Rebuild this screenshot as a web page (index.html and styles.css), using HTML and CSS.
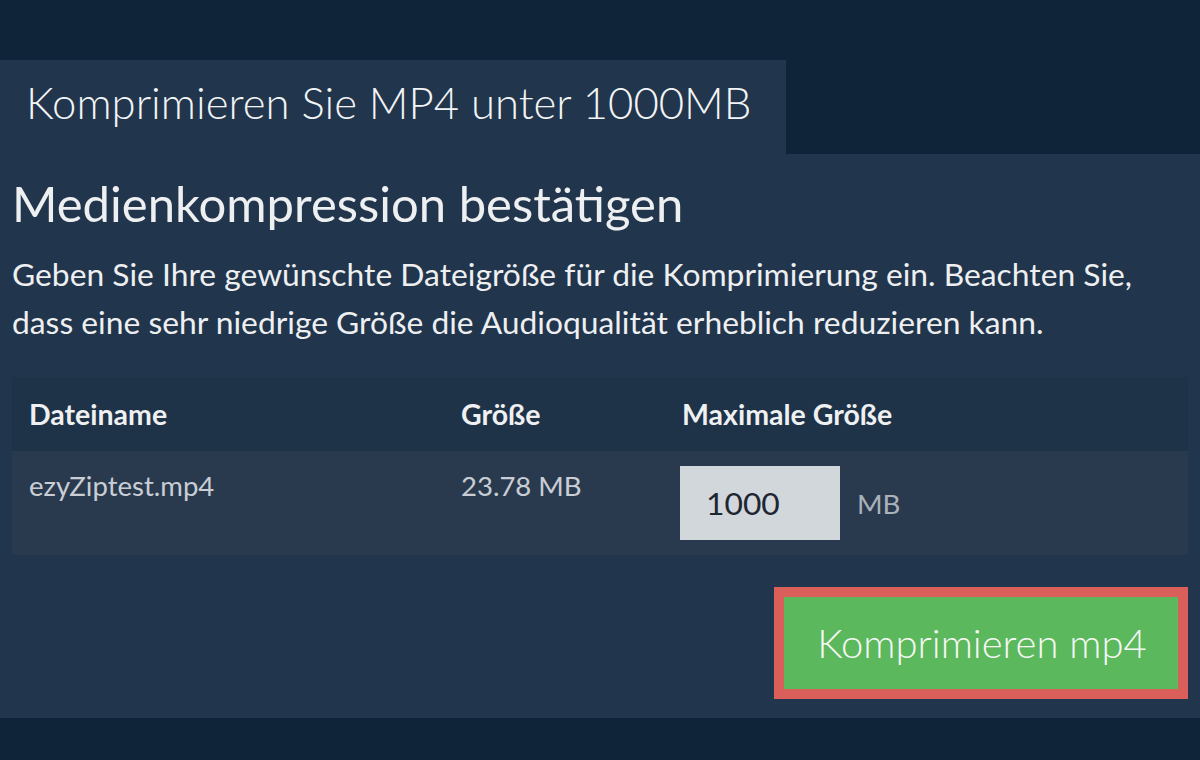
FILE: index.html
```html
<!DOCTYPE html>
<html lang="de">
<head>
<meta charset="utf-8">
<title>Komprimieren Sie MP4 unter 1000MB</title>
<link rel="stylesheet" href="styles.css">
</head>
<body>
<div class="page">
  <div class="tab">Komprimieren Sie MP4 unter 1000MB</div>
  <main class="panel">
    <h1 class="title">Medienkompression bestätigen</h1>
    <p class="intro">Geben Sie Ihre gewünschte Dateigröße für die Komprimierung ein. Beachten Sie, dass eine sehr niedrige Größe die Audioqualität erheblich reduzieren kann.</p>
    <table class="files">
      <thead>
        <tr>
          <th class="col-name">Dateiname</th>
          <th class="col-size">Größe</th>
          <th class="col-max">Maximale Größe</th>
        </tr>
      </thead>
      <tbody>
        <tr>
          <td class="cell-text">ezyZiptest.mp4</td>
          <td class="cell-text">23.78 MB</td>
          <td class="cell-input">
            <div class="size-field">
              <input class="size-input" type="text" value="1000">
              <span class="unit">MB</span>
            </div>
          </td>
        </tr>
      </tbody>
    </table>
    <div class="actions">
      <button class="compress-btn" type="button">Komprimieren mp4</button>
    </div>
  </main>
</div>
</body>
</html>
```

FILE: styles.css
```css
html, body {
  margin: 0;
  padding: 0;
}

body {
  background: #0f2339;
  font-family: Lato, "Open Sans", "Liberation Sans", sans-serif;
  color: #f0f1f2;
  width: 1200px;
  height: 760px;
  overflow: hidden;
}

.page {
  padding-top: 60px;
}

.tab {
  display: block;
  width: fit-content;
  box-sizing: border-box;
  background: #21354c;
  height: 94px;
  line-height: 84px;
  padding: 0 35px 0 26px;
  font-size: 43.7px;
  font-weight: 300;
  color: #f3f4f5;
  white-space: nowrap;
}

.panel {
  display: block;
  background: #21354c;
  padding: 0 12px 20px;
  height: 544px;
}

.title {
  margin: 0;
  padding-top: 19px;
  font-size: 49px;
  line-height: 60px;
  font-weight: 400;
  color: #eeeff1;
}

.intro {
  margin: 17px 0 0;
  font-size: 31.8px;
  line-height: 48px;
  color: #eeeff1;
}

.files {
  margin-top: 31px;
  width: 100%;
  border-collapse: collapse;
}

.files th {
  background: #1e3248;
  text-align: left;
  font-weight: 700;
  font-size: 28.5px;
  color: #eef0f2;
  height: 74px;
  line-height: 30px;
  padding: 0 17px;
}

.col-name { width: 398px; }
.col-size { width: 187px; }

.files td {
  background: #2a3a4e;
  vertical-align: top;
  padding: 20px 17px 16px;
  color: #c9ced5;
  font-size: 27.5px;
  line-height: 30px;
}

.files td.cell-input {
  padding: 15px 17px 15px 15px;
}

.size-field {
  display: flex;
  align-items: center;
  gap: 17px;
}

.size-input {
  width: 160px;
  height: 74px;
  box-sizing: border-box;
  border: none;
  margin: 0;
  padding: 0 0 0 26px;
  background: #d2d7dc;
  color: #1e2631;
  font-family: Lato, "Open Sans", sans-serif;
  font-size: 31.8px;
  outline: none;
}

.unit {
  font-size: 27.6px;
  color: #a9b1bb;
  padding-top: 2px;
}

.actions {
  display: flex;
  justify-content: flex-end;
  margin-top: 32px;
}

.compress-btn {
  width: 414px;
  height: 112px;
  box-sizing: border-box;
  border: 10px solid #da5e5a;
  background: #5cb85c;
  color: #f6f8f6;
  font-family: Lato, "Open Sans", sans-serif;
  font-size: 40px;
  font-weight: 300;
  line-height: 92px;
  padding: 0 0 0 2px;
  cursor: pointer;
}
```
